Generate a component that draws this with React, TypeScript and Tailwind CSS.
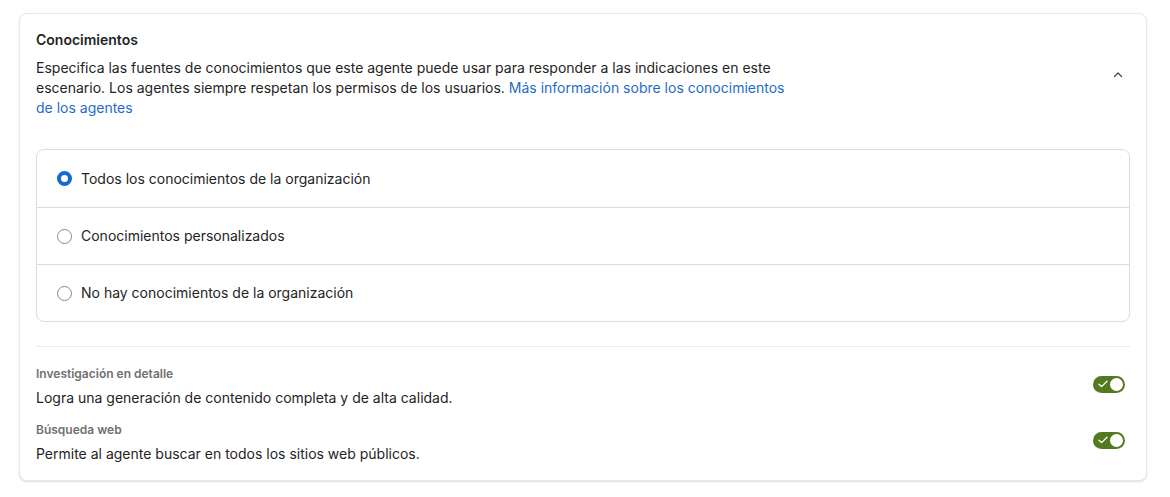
import React from "react";

function Radio({ checked }: { checked?: boolean }) {
  if (checked) {
    return <span className="block h-[15px] w-[15px] rounded-full border-[4px] border-[#1668d6] bg-white" />;
  }
  return <span className="block h-[15px] w-[15px] rounded-full border border-[#8a8a8a] bg-white" />;
}

function Toggle() {
  return (
    <div className="relative flex h-[17px] w-[32px] items-center rounded-full bg-[#547a1f]">
      <svg className="ml-[5px]" width="10" height="8" viewBox="0 0 10 8" fill="none">
        <path d="M1 4.2 L3.6 6.6 L9 1.2" stroke="white" strokeWidth="1.3" strokeLinecap="round" strokeLinejoin="round" />
      </svg>
      <span className="absolute right-[2px] h-[13px] w-[13px] rounded-full bg-white" />
    </div>
  );
}

export default function App() {
  const options = [
    { label: "Todos los conocimientos de la organización", checked: true },
    { label: "Conocimientos personalizados", checked: false },
    { label: "No hay conocimientos de la organización", checked: false },
  ];

  const toggles = [
    { title: "Investigación en detalle", text: "Logra una generación de contenido completa y de alta calidad." },
    { title: "Búsqueda web", text: "Permite al agente buscar en todos los sitios web públicos." },
  ];

  return (
    <div className="min-h-screen bg-white pt-[13px] pl-[19px] pr-[23px] pb-[17px] font-['Inter',sans-serif] text-[#242424]">
      <div className="rounded-[8px] border border-[#e8e8e8] bg-white px-[16px] pt-[16px] pb-[16px] shadow-[0_1px_2px_rgba(0,0,0,0.14)]">
        {/* Header */}
        <div className="flex items-center justify-between">
          <div className="max-w-[768px]">
            <h2 className="text-[14px] font-semibold leading-[20px]">Conocimientos</h2>
            <p className="mt-[8px] text-[14px] leading-[20px]">
              Especifica las fuentes de conocimientos que este agente puede usar para responder a las indicaciones en este
              escenario. Los agentes siempre respetan los permisos de los usuarios.{" "}
              <a href="#" className="text-[#1f6cc7]">Más información sobre los conocimientos de los agentes</a>
            </p>
          </div>
          <svg className="mr-[6px] mt-[2px]" width="12" height="12" viewBox="0 0 12 12" fill="none">
            <path d="M2.5 7.5 L6 4 L9.5 7.5" stroke="#424242" strokeWidth="1.2" strokeLinecap="round" strokeLinejoin="round" />
          </svg>
        </div>

        {/* Options */}
        <div className="mt-[31px] overflow-hidden rounded-[8px] border border-[#dcdcdc]">
          {options.map((o, i) => (
            <div
              key={o.label}
              className={`flex h-[57px] items-center gap-[9px] pl-[20px] ${i > 0 ? "border-t border-[#dcdcdc]" : ""}`}
            >
              <Radio checked={o.checked} />
              <span className="text-[14px] leading-[20px]">{o.label}</span>
            </div>
          ))}
        </div>

        <div className="mt-[24px] border-t border-[#ebebeb]" />

        {/* Toggles */}
        <div className="mt-[19px] flex flex-col gap-[14px]">
          {toggles.map((t) => (
            <div key={t.title} className="flex items-center justify-between">
              <div>
                <div className="text-[12px] font-semibold leading-[16px] text-[#707070]">{t.title}</div>
                <div className="mt-[6px] text-[14px] leading-[20px]">{t.text}</div>
              </div>
              <div className="mr-[5px] mb-[6px]">
                <Toggle />
              </div>
            </div>
          ))}
        </div>
      </div>
    </div>
  );
}
